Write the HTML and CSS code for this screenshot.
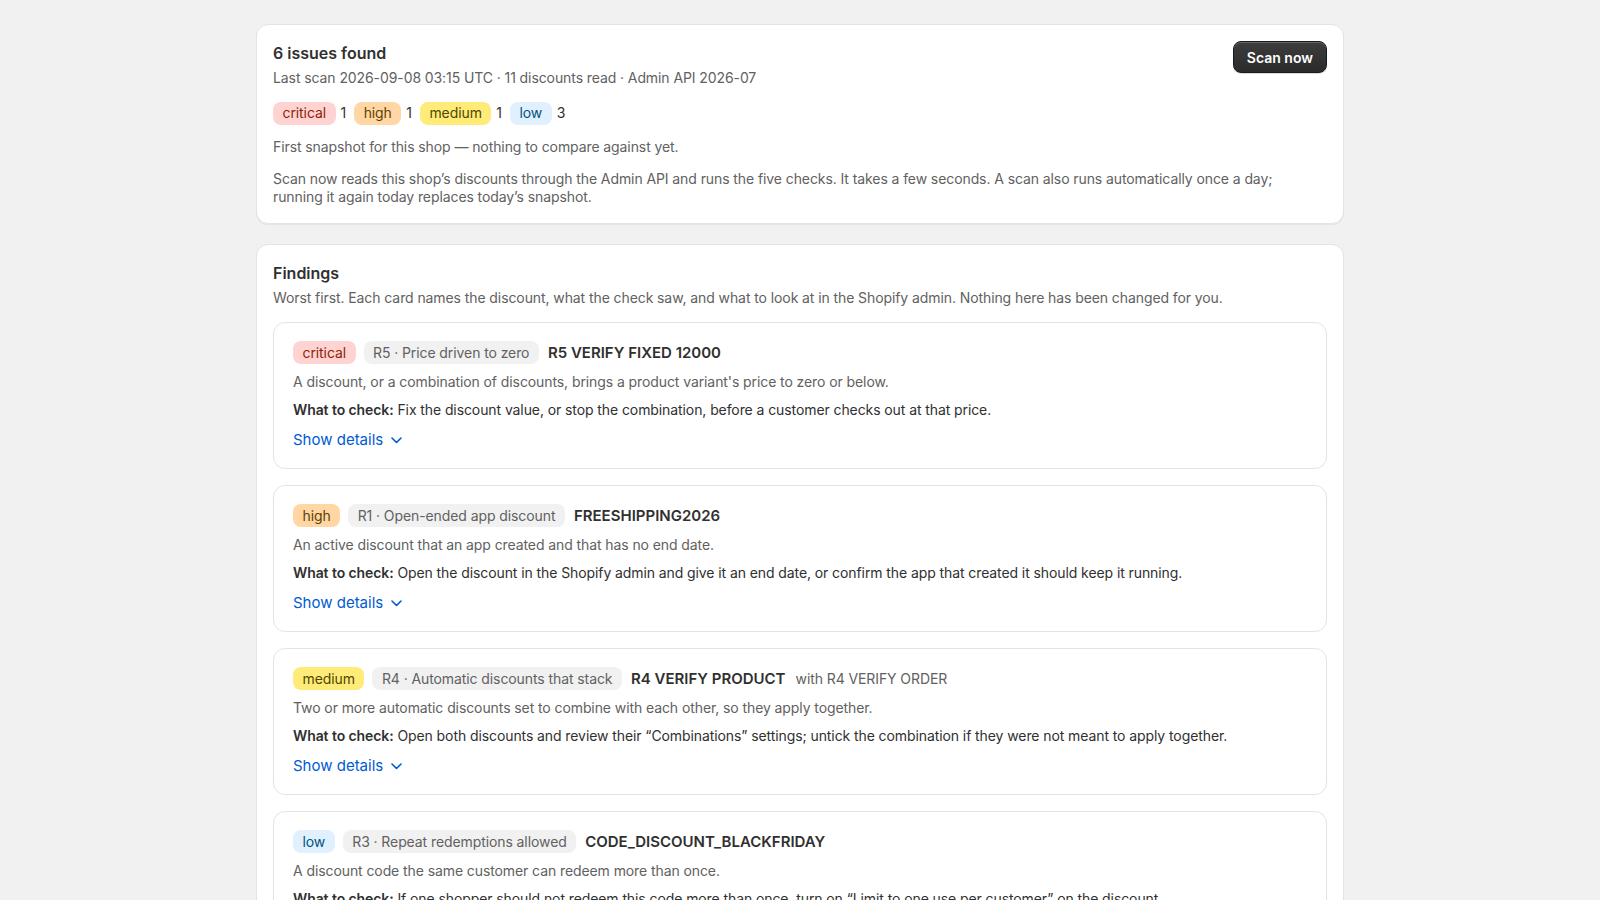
FILE: index.html
```html
<!DOCTYPE html>
<html lang="en">
<head>
    <meta charset="UTF-8">
    <meta name="viewport" content="width=device-width, initial-scale=1.0">
    <title>Discount checks</title>
    <link rel="stylesheet" href="styles.css">
</head>
<body>
    <main class="page">
        <!-- Summary -->
        <section class="card summary">
            <div class="summary-head">
                <div>
                    <h2 class="card-title">6 issues found</h2>
                    <p class="meta">Last scan 2026-09-08 03:15 UTC · 11 discounts read · Admin API 2026-07</p>
                </div>
                <button class="btn-primary">Scan now</button>
            </div>

            <div class="counts">
                <span class="count"><span class="badge badge-critical">critical</span>1</span>
                <span class="count"><span class="badge badge-high">high</span>1</span>
                <span class="count"><span class="badge badge-medium">medium</span>1</span>
                <span class="count"><span class="badge badge-low">low</span>3</span>
            </div>

            <p class="note">First snapshot for this shop — nothing to compare against yet.</p>
            <p class="note note-long">Scan now reads this shop’s discounts through the Admin API and runs the five checks. It takes a few seconds. A scan also runs automatically once a day; running it again today replaces today’s snapshot.</p>
        </section>

        <!-- Findings -->
        <section class="card findings">
            <h2 class="card-title">Findings</h2>
            <p class="meta">Worst first. Each card names the discount, what the check saw, and what to look at in the Shopify admin. Nothing here has been changed for you.</p>

            <div class="finding-list">
                <article class="finding">
                    <div class="finding-head">
                        <span class="badge badge-critical">critical</span>
                        <span class="badge badge-rule">R5 · Price driven to zero</span>
                        <span class="finding-name">R5 VERIFY FIXED 12000</span>
                    </div>
                    <p class="finding-desc">A discount, or a combination of discounts, brings a product variant's price to zero or below.</p>
                    <p class="finding-check"><strong>What to check:</strong> Fix the discount value, or stop the combination, before a customer checks out at that price.</p>
                    <button class="details-toggle">Show details
                        <svg width="11" height="7" viewBox="0 0 11 7"><polyline points="1,1 5.5,5.5 10,1" fill="none" stroke="currentColor" stroke-width="1.6" stroke-linecap="round" stroke-linejoin="round"/></svg>
                    </button>
                </article>

                <article class="finding">
                    <div class="finding-head">
                        <span class="badge badge-high">high</span>
                        <span class="badge badge-rule">R1 · Open-ended app discount</span>
                        <span class="finding-name">FREESHIPPING2026</span>
                    </div>
                    <p class="finding-desc">An active discount that an app created and that has no end date.</p>
                    <p class="finding-check"><strong>What to check:</strong> Open the discount in the Shopify admin and give it an end date, or confirm the app that created it should keep it running.</p>
                    <button class="details-toggle">Show details
                        <svg width="11" height="7" viewBox="0 0 11 7"><polyline points="1,1 5.5,5.5 10,1" fill="none" stroke="currentColor" stroke-width="1.6" stroke-linecap="round" stroke-linejoin="round"/></svg>
                    </button>
                </article>

                <article class="finding">
                    <div class="finding-head">
                        <span class="badge badge-medium">medium</span>
                        <span class="badge badge-rule">R4 · Automatic discounts that stack</span>
                        <span class="finding-name">R4 VERIFY PRODUCT</span>
                        <span class="finding-with">with R4 VERIFY ORDER</span>
                    </div>
                    <p class="finding-desc">Two or more automatic discounts set to combine with each other, so they apply together.</p>
                    <p class="finding-check"><strong>What to check:</strong> Open both discounts and review their “Combinations” settings; untick the combination if they were not meant to apply together.</p>
                    <button class="details-toggle">Show details
                        <svg width="11" height="7" viewBox="0 0 11 7"><polyline points="1,1 5.5,5.5 10,1" fill="none" stroke="currentColor" stroke-width="1.6" stroke-linecap="round" stroke-linejoin="round"/></svg>
                    </button>
                </article>

                <article class="finding">
                    <div class="finding-head">
                        <span class="badge badge-low">low</span>
                        <span class="badge badge-rule">R3 · Repeat redemptions allowed</span>
                        <span class="finding-name">CODE_DISCOUNT_BLACKFRIDAY</span>
                    </div>
                    <p class="finding-desc">A discount code the same customer can redeem more than once.</p>
                    <p class="finding-check"><strong>What to check:</strong> If one shopper should not redeem this code more than once, turn on “Limit to one use per customer” on the discount.</p>
                    <button class="details-toggle">Show details
                        <svg width="11" height="7" viewBox="0 0 11 7"><polyline points="1,1 5.5,5.5 10,1" fill="none" stroke="currentColor" stroke-width="1.6" stroke-linecap="round" stroke-linejoin="round"/></svg>
                    </button>
                </article>
            </div>
        </section>
    </main>
</body>
</html>
```

FILE: styles.css
```css
* {
    margin: 0;
    padding: 0;
    box-sizing: border-box;
}

body {
    font-family: Inter, 'Noto Sans', Arial, sans-serif;
    font-size: 14px;
    line-height: 20px;
    letter-spacing: -0.09px;
    background: #f1f1f1;
    color: #303030;
}

.page {
    width: 1088px;
    margin: 0 auto;
    padding: 24px 0;
    display: flex;
    flex-direction: column;
    gap: 20px;
}

.card {
    background: #fff;
    border: 1px solid #e3e3e3;
    border-radius: 12px;
    box-shadow: 0 1px 0 rgba(0,0,0,0.05);
    padding: 16px 16px 17px;
}

.card-title {
    font-size: 16px;
    line-height: 24px;
    font-weight: 600;
    color: #303030;
    letter-spacing: 0;
}

.meta {
    color: #616161;
    margin-top: 3px;
}

.summary-head {
    display: flex;
    justify-content: space-between;
    align-items: flex-start;
}

.btn-primary {
    height: 32px;
    padding: 0 13px;
    border: 1px solid #1a1a1a;
    border-radius: 8px;
    background: linear-gradient(180deg, #3d3d3d, #2b2b2b);
    box-shadow: inset 0 1px 0 rgba(255,255,255,0.22), 0 1px 1px rgba(0,0,0,0.15);
    color: #fff;
    font-family: inherit;
    font-size: 14px;
    font-weight: 600;
    cursor: pointer;
}

.counts {
    display: flex;
    align-items: center;
    gap: 8px;
    margin-top: 13px;
    height: 24px;
}

.count {
    display: flex;
    align-items: center;
    gap: 5px;
}

.note {
    color: #616161;
    margin-top: 12px;
}

.note-long {
    line-height: 18px;
    max-width: 1036px;
    margin-top: 13px;
}

/* badges */
.badge {
    display: inline-flex;
    align-items: center;
    height: 23px;
    padding: 0 9.5px;
    border-radius: 8px;
    white-space: nowrap;
}

.badge-critical {
    background: #fed3d1;
    color: #8e1f0b;
}

.badge-high {
    background: #ffd6a4;
    color: #5e4200;
}

.badge-medium {
    background: #ffeb78;
    color: #4f4700;
}

.badge-low {
    background: #e0f0ff;
    color: #00527c;
}

.badge-rule {
    background: #f1f1f1;
    color: #616161;
}

/* findings */
.finding-list {
    display: flex;
    flex-direction: column;
    gap: 16px;
    margin-top: 14px;
}

.finding {
    border: 1px solid #e3e3e3;
    border-radius: 12px;
    padding: 18px 19px 18px;
}

.finding-head {
    display: flex;
    align-items: center;
    gap: 8px;
    min-height: 23px;
}

.finding-name {
    font-weight: 600;
    font-size: 15px;
    letter-spacing: 0;
    margin-left: 1px;
}

.finding-with {
    color: #616161;
    margin-left: 2px;
}

.finding-desc {
    color: #616161;
    margin-top: 8px;
}

.finding-check {
    margin-top: 8px;
}

.finding-check strong {
    font-weight: 600;
}

.details-toggle {
    display: inline-flex;
    align-items: center;
    gap: 8px;
    margin-top: 10px;
    border: none;
    background: none;
    color: #005bd3;
    font-family: inherit;
    font-size: 15px;
    line-height: 20px;
    letter-spacing: 0;
    cursor: pointer;
}
```
